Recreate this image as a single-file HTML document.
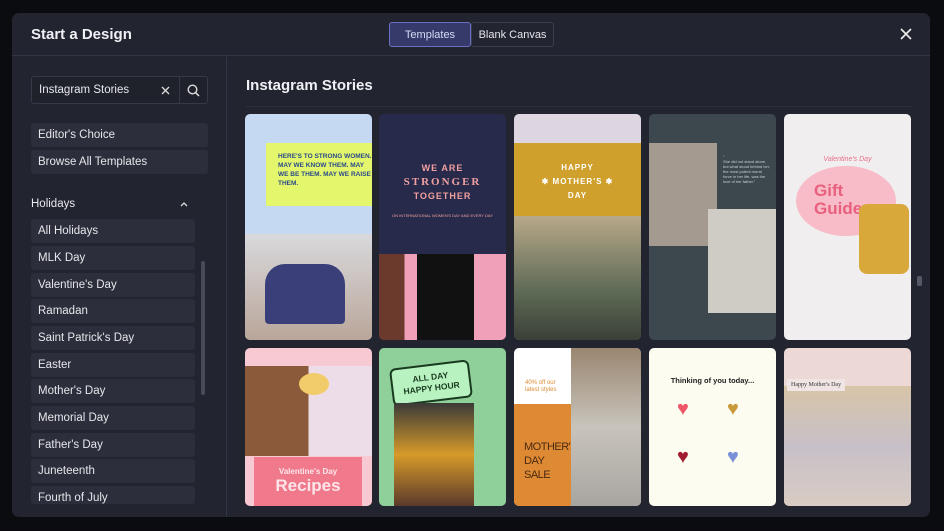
<!DOCTYPE html><html><head><style>
*{box-sizing:border-box;margin:0;padding:0}
body{width:944px;height:531px;background:#0b0c10;font-family:"Liberation Sans",sans-serif;overflow:hidden;position:relative;color:#e8e9ee}
.modal{position:absolute;left:12px;top:13px;width:918px;height:504px;background:#22242f;border-radius:7px;overflow:hidden}
.hdr{position:absolute;left:0;top:0;width:100%;height:43px;border-bottom:1px solid #323543}
.title{position:absolute;left:19px;top:13px;font-size:15px;font-weight:bold;color:#f0f1f5}
.tab{position:absolute;top:9px;height:25px;border:1px solid #3a3d4c;border-radius:3px;font-size:11px;line-height:24px;text-align:center}
.side{position:absolute;left:0;top:44px;width:215px;height:460px;border-right:1px solid #323543}
.search{position:absolute;left:19px;top:19px;width:177px;height:28px;border:1px solid #363947;border-radius:3px;background:#1f212b;font-size:11.5px;line-height:27px;padding-left:7px}
.item{position:absolute;left:19px;width:164px;height:24px;background:#2c2e3b;border-radius:3px;font-size:11.5px;line-height:25px;padding-left:7px;color:#e6e7ec}
.card{position:absolute;width:127px;border-radius:5px;overflow:hidden}
</style></head><body>
<div class="modal">
<div class="hdr">
<div class="title">Start a Design</div>
<div class="tab" style="left:377px;width:82px;background:#363a6a;border-color:#6a70c4;color:#d8dbf5">Templates</div>
<div class="tab" style="left:459px;width:83px;color:#e4e5ea">Blank Canvas</div>
<svg style="position:absolute;left:888px;top:15px" width="12" height="12"><path d="M1 1L11 11M11 1L1 11" stroke="#eee" stroke-width="1.6"/></svg>
</div>
<div class="side">
<div class="search">Instagram Stories
<svg style="position:absolute;left:129px;top:9px" width="9" height="9"><path d="M1 1L8 8M8 1L1 8" stroke="#ddd" stroke-width="1.3"/></svg>
<div style="position:absolute;left:147px;top:0;width:1px;height:26px;background:#363947"></div>
<svg style="position:absolute;left:155px;top:7px" width="13" height="13"><circle cx="5.5" cy="5.5" r="4.3" stroke="#ddd" stroke-width="1.4" fill="none"/><path d="M8.7 8.7L12 12" stroke="#ddd" stroke-width="1.5"/></svg>
</div>
<div class="item" style="top:66px;width:177px">Editor's Choice</div>
<div class="item" style="top:93px;width:177px">Browse All Templates</div>
<div style="position:absolute;left:19px;top:141px;font-size:11.5px">Holidays</div>
<svg style="position:absolute;left:168px;top:144px" width="8" height="6"><path d="M1 5L4 2L7 5" stroke="#ddd" stroke-width="1.3" fill="none"/></svg>
<div class="item" style="top:162px">All Holidays</div>
<div class="item" style="top:189px">MLK Day</div>
<div class="item" style="top:216px">Valentine's Day</div>
<div class="item" style="top:242px">Ramadan</div>
<div class="item" style="top:269px">Saint Patrick's Day</div>
<div class="item" style="top:296px">Easter</div>
<div class="item" style="top:322px">Mother's Day</div>
<div class="item" style="top:349px">Memorial Day</div>
<div class="item" style="top:376px">Father's Day</div>
<div class="item" style="top:402px">Juneteenth</div>
<div class="item" style="top:429px;height:18px;overflow:hidden">Fourth of July</div>
<div style="position:absolute;left:189px;top:204px;width:4px;height:134px;background:#474a58;border-radius:2px"></div>
</div>
<div style="position:absolute;left:234px;top:64px;font-size:15px;font-weight:bold;color:#f0f1f5">Instagram Stories</div>
<div style="position:absolute;left:234px;top:93px;width:666px;height:1px;background:#2d303c"></div>
<div style="position:absolute;left:905px;top:263px;width:5px;height:10px;background:#555866;border-radius:2px"></div>
<!-- row1 -->
<div class="card" style="left:233px;top:101px;height:226px;background:#c6d9f2">
<div style="position:absolute;left:21px;top:29px;width:106px;height:63px;background:#e4f66c;color:#2a4a8a;font-size:6.5px;font-weight:bold;padding:9px 0 0 12px;line-height:9px">HERE'S TO STRONG WOMEN. MAY WE KNOW THEM. MAY WE BE THEM. MAY WE RAISE THEM.</div>
<div style="position:absolute;left:0;top:120px;width:127px;height:106px;background:linear-gradient(#d9d9dc,#b9a69a)"></div>
<div style="position:absolute;left:20px;top:150px;width:80px;height:60px;background:#3a3f7a;border-radius:20px 20px 4px 4px"></div>
</div>
<div class="card" style="left:367px;top:101px;height:226px;background:#272a4a;text-align:center">
<div style="margin-top:47px;color:#f0a0a0;font-size:9px;font-weight:bold;letter-spacing:1px;line-height:14px">WE ARE<br><span style="font-family:'Liberation Serif';font-size:11px;letter-spacing:2px">STRONGER</span><br>TOGETHER</div>
<div style="color:#f0a0a0;font-size:4px;margin-top:10px">ON INTERNATIONAL WOMEN'S DAY AND EVERY DAY</div>
<div style="position:absolute;left:0;top:140px;width:127px;height:86px;background:linear-gradient(90deg,#6b3a2c 0 20%,#f0a0b8 20% 30%,#111 30% 75%,#f0a0b8 75%)"></div>
</div>
<div class="card" style="left:502px;top:101px;height:226px;background:#6e7a4a">
<div style="position:absolute;left:0;top:0;width:127px;height:29px;background:#ddd6e0"></div>
<div style="position:absolute;left:0;top:29px;width:127px;height:73px;background:#cfa12c;color:#fff;font-size:8px;font-weight:bold;text-align:center;padding-top:18px;line-height:14px;letter-spacing:1px">HAPPY<br>✱ MOTHER'S ✱<br>DAY</div>
<div style="position:absolute;left:0;top:102px;width:127px;height:124px;background:linear-gradient(#b8a88a,#5f6b56 60%,#3b4038)"></div>
</div>
<div class="card" style="left:637px;top:101px;height:226px;background:#3c474e">
<div style="position:absolute;left:0;top:29px;width:68px;height:103px;background:#a59a90"></div>
<div style="position:absolute;left:59px;top:95px;width:68px;height:104px;background:#cfcbc5"></div>
<div style="position:absolute;left:74px;top:40px;width:48px;color:#c8d0d4;font-size:4px;line-height:5px">“<br>She did not stand alone, but what stood behind her, the most potent moral force in her life, was the love of her father.”</div>
</div>
<div class="card" style="left:772px;top:101px;height:226px;background:#f1eef0">
<div style="position:absolute;left:12px;top:52px;width:100px;height:70px;background:#f7bcc8;border-radius:50%"></div>
<div style="position:absolute;left:0;top:42px;width:127px;text-align:center;color:#e8708a;font-size:7px;font-style:italic">Valentine's Day</div>
<div style="position:absolute;left:30px;top:68px;color:#e8607e;font-size:17px;font-weight:bold;line-height:18px">Gift<br>Guide</div>
<div style="position:absolute;left:75px;top:90px;width:50px;height:70px;background:#d9a83a;border-radius:8px"></div>
</div>
<!-- row2 -->
<div class="card" style="left:233px;top:335px;height:158px;background:#f7c9d2">
<div style="position:absolute;left:0;top:18px;width:127px;height:90px;background:linear-gradient(90deg,#8a5a3a 0 50%,#ecdde8 50%)"></div>
<div style="position:absolute;left:54px;top:25px;width:30px;height:22px;background:#f2cc6a;border-radius:50%"></div>
<div style="position:absolute;left:9px;top:109px;width:108px;height:49px;background:#f07a8c;color:#fde6ea;font-weight:bold;text-align:center;font-size:8px;padding-top:10px">Valentine's Day<br><span style="font-size:17px">Recipes</span></div>
</div>
<div class="card" style="left:367px;top:335px;height:158px;background:#8fd09a">
<div style="position:absolute;left:12px;top:16px;width:80px;height:38px;background:#b8f2c0;border:2px solid #1a3a20;border-radius:6px;transform:rotate(-7deg);text-align:center;font-size:8.5px;font-weight:bold;color:#1a3a20;padding-top:6px;line-height:11px">ALL DAY<br>HAPPY HOUR</div>
<div style="position:absolute;left:15px;top:55px;width:80px;height:103px;background:linear-gradient(#3a3a38,#d69a2a 50%,#5a3a2a)"></div>
</div>
<div class="card" style="left:502px;top:335px;height:158px;background:#fff">
<div style="position:absolute;left:0;top:56px;width:57px;height:102px;background:#de8a34;color:#4a2a10;font-size:11px;padding:36px 0 0 10px;line-height:14px;letter-spacing:-0.5px;overflow:hidden">MOTHER'S<br>DAY SALE</div>
<div style="position:absolute;left:11px;top:32px;color:#de8a34;font-size:6px;line-height:7px">40% off our<br>latest styles</div>
<div style="position:absolute;left:57px;top:0;width:70px;height:158px;background:linear-gradient(#9a8670,#c8c4bc 50%,#a8a4a0)"></div>
</div>
<div class="card" style="left:637px;top:335px;height:158px;background:#fdfcf0">
<div style="position:absolute;top:28px;width:100%;text-align:center;font-size:7.5px;font-weight:bold;color:#222">Thinking of you today...</div>
<div style="position:absolute;left:28px;top:50px;color:#ee5566;font-size:20px">♥</div>
<div style="position:absolute;left:78px;top:50px;color:#c89a3a;font-size:20px">♥</div>
<div style="position:absolute;left:28px;top:98px;color:#a21a30;font-size:20px">♥</div>
<div style="position:absolute;left:78px;top:98px;color:#7890d8;font-size:20px">♥</div>
</div>
<div class="card" style="left:772px;top:335px;height:158px;background:#ecd8d4">
<div style="position:absolute;left:0;top:38px;width:127px;height:120px;background:linear-gradient(#d8c4a8,#c8c0c8 50%,#d8ccc4)"></div>
<div style="position:absolute;left:3px;top:31px;background:#f0e4e4;font-size:6px;padding:3px 4px;color:#333;font-family:'Liberation Serif'">Happy Mother's Day</div>
</div>
</div>
</body></html>
